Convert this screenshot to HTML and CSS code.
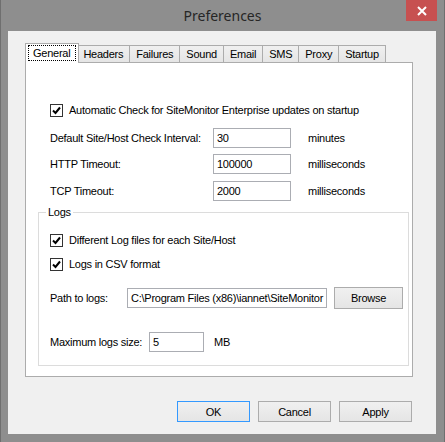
FILE: index.html
```html
<!DOCTYPE html>
<html lang="en">
<head>
    <meta charset="UTF-8">
    <title>Preferences</title>
    <link rel="stylesheet" href="styles.css">
</head>
<body>
    <div class="window">
        <div class="titlebar">
            <span class="title">Preferences</span>
            <button class="close-btn">
                <svg width="10" height="10" viewBox="0 0 10 10"><path d="M1 1 L9 9 M9 1 L1 9" stroke="#fff" stroke-width="2"/></svg>
            </button>
        </div>

        <div class="client">
            <div class="tabs">
                <div class="tab active"><span class="focus">General</span></div>
                <div class="tab">Headers</div>
                <div class="tab">Failures</div>
                <div class="tab">Sound</div>
                <div class="tab">Email</div>
                <div class="tab">SMS</div>
                <div class="tab">Proxy</div>
                <div class="tab">Startup</div>
            </div>

            <div class="panel">
                <label class="check-row first">
                    <span class="checkbox"><svg width="11" height="11" viewBox="0 0 11 11"><path d="M2 5.5 L4.5 8 L9 2.5" fill="none" stroke="#000" stroke-width="2"/></svg></span>
                    Automatic Check for SiteMonitor Enterprise updates on startup
                </label>

                <div class="field-row interval">
                    <span class="label">Default Site/Host Check Interval:</span>
                    <span class="input">30</span>
                    <span class="unit">minutes</span>
                </div>
                <div class="field-row http">
                    <span class="label">HTTP Timeout:</span>
                    <span class="input">100000</span>
                    <span class="unit">milliseconds</span>
                </div>
                <div class="field-row tcp">
                    <span class="label">TCP Timeout:</span>
                    <span class="input">2000</span>
                    <span class="unit">milliseconds</span>
                </div>

                <fieldset class="group">
                    <legend>Logs</legend>
                    <label class="check-row">
                        <span class="checkbox"><svg width="11" height="11" viewBox="0 0 11 11"><path d="M2 5.5 L4.5 8 L9 2.5" fill="none" stroke="#000" stroke-width="2"/></svg></span>
                        Different Log files for each Site/Host
                    </label>
                    <label class="check-row csv">
                        <span class="checkbox"><svg width="11" height="11" viewBox="0 0 11 11"><path d="M2 5.5 L4.5 8 L9 2.5" fill="none" stroke="#000" stroke-width="2"/></svg></span>
                        Logs in CSV format
                    </label>

                    <div class="field-row path">
                        <span class="label short">Path to logs:</span>
                        <span class="input wide">C:\Program Files (x86)\iannet\SiteMonitor</span>
                        <button class="btn browse">Browse</button>
                    </div>

                    <div class="field-row size">
                        <span class="label size-label">Maximum logs size:</span>
                        <span class="input small">5</span>
                        <span class="unit mb">MB</span>
                    </div>
                </fieldset>
            </div>

            <div class="footer">
                <button class="btn default">OK</button>
                <button class="btn">Cancel</button>
                <button class="btn">Apply</button>
            </div>
        </div>
    </div>
</body>
</html>
```

FILE: styles.css
```css
html, body {
    margin: 0;
    padding: 0;
}
body {
    width: 445px;
    height: 442px;
    overflow: hidden;
    font-family: "Liberation Sans", Arial, sans-serif;
    font-size: 11px;
    letter-spacing: -0.25px;
    color: #000;
}
.window {
    position: relative;
    box-sizing: border-box;
    width: 445px;
    height: 442px;
    background-color: #8e8e8e;
    border-left: 1px solid #6f6f6f;
    border-right: 1px solid #6f6f6f;
    display: flex;
    flex-direction: column;
}
.titlebar {
    height: 31px;
    display: flex;
    justify-content: center;
    align-items: center;
}
.title {
    font-family: "Noto Sans", sans-serif;
    font-size: 14px;
    letter-spacing: 0;
    color: #262626;
    margin-top: -1px;
}
.close-btn {
    position: absolute;
    top: 0;
    right: 7px;
    width: 31px;
    height: 21px;
    border: none;
    padding: 0;
    background-color: #c75050;
    display: flex;
    align-items: center;
    justify-content: center;
}
.client {
    flex: 1;
    margin: 0 8px 8px 7px;
    background-color: #f0f0f0;
    padding: 12px 23px 0 17px;
}
.tabs {
    display: flex;
    align-items: flex-end;
    height: 19px;
    padding-left: 2px;
}
.tab {
    height: 16px;
    line-height: 16px;
    padding: 0 6px;
    border: 1px solid #acacac;
    border-bottom: none;
    margin-left: -1px;
    background: linear-gradient(#f0f0f0, #e5e5e5);
}
.tab.active {
    height: 19px;
    line-height: 18px;
    margin-left: -2px;
    margin-right: -2px;
    padding: 0 2px;
    background-color: #fff;
    background-image: none;
    position: relative;
    z-index: 1;
    margin-bottom: -1px;
}
.focus {
    display: inline-block;
    border: 1px dotted #000;
    line-height: 14px;
    padding: 0 5px 0 4px;
}
.panel {
    box-sizing: border-box;
    height: 315px;
    background-color: #fff;
    border: 1px solid #acacac;
    padding: 39px 0 0 24px;
}
.check-row {
    display: flex;
    align-items: center;
    height: 16px;
}
.checkbox {
    box-sizing: border-box;
    width: 13px;
    height: 13px;
    border: 1px solid #333;
    background-color: #fff;
    margin-right: 6px;
    display: flex;
    align-items: center;
    justify-content: center;
}
.field-row {
    display: flex;
    align-items: center;
    height: 20px;
}
.interval {
    margin-top: 10px;
}
.http {
    margin-top: 6px;
}
.tcp {
    margin-top: 7px;
}
.label {
    width: 163px;
}
.input {
    box-sizing: border-box;
    width: 78px;
    height: 20px;
    line-height: 18px;
    padding: 0 3px;
    border: 1px solid #abadb3;
    background-color: #fff;
    white-space: nowrap;
    overflow: hidden;
}
.unit {
    margin-left: 17px;
}
.group {
    box-sizing: border-box;
    width: 371px;
    margin: 5px 0 0 -12px;
    padding: 14px 0 13px 11px;
    border: 1px solid #dcdcdc;
}
.group legend {
    padding: 0 2px;
    margin-left: -4px;
    line-height: 12px;
}
.csv {
    margin-top: 8px;
}
.path {
    margin-top: 16px;
}
.label.short {
    width: 77px;
}
.input.wide {
    width: 200px;
}
.btn {
    box-sizing: border-box;
    font-family: "Liberation Sans", Arial, sans-serif;
    font-size: 11px;
    letter-spacing: -0.25px;
    color: #000;
    width: 73px;
    height: 21px;
    padding: 0;
    border: 1px solid #acacac;
    background: linear-gradient(#f0f0f0, #e5e5e5);
}
.browse {
    width: 69px;
    height: 22px;
    margin-left: 7px;
}
.size {
    margin-top: 24px;
}
.size-label {
    width: 99px;
}
.input.small {
    width: 55px;
}
.mb {
    margin-left: 10px;
}
.footer {
    display: flex;
    justify-content: flex-end;
    gap: 8px;
    margin-top: 24px;
    padding-right: 1px;
}
.btn.default {
    border-color: #3399ff;
}
```
